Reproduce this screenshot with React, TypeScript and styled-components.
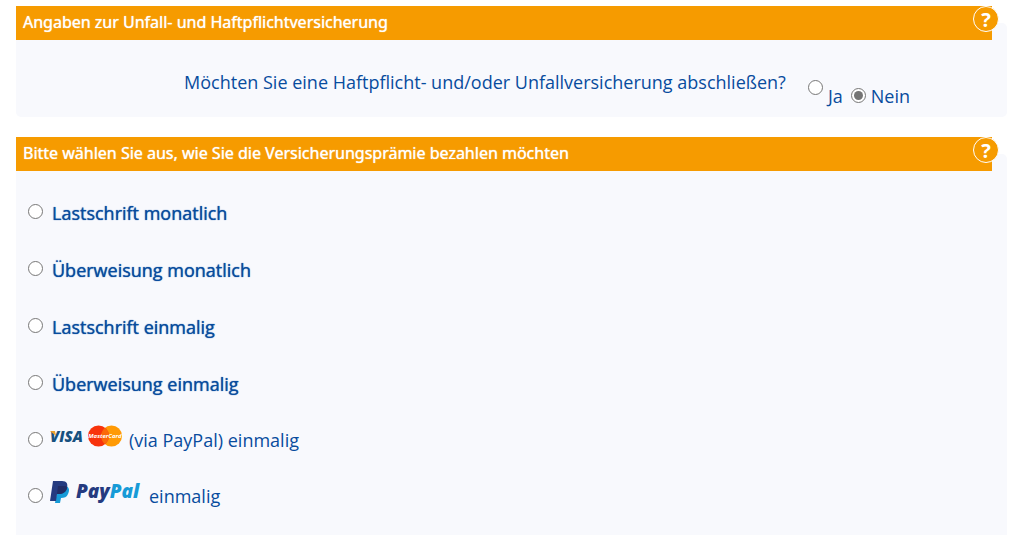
import React from "react";
import styled, { createGlobalStyle } from "styled-components";

const GlobalStyle = createGlobalStyle`
  * { box-sizing: border-box; }
  body {
    margin: 0;
    background: #fff;
    color: #084c9e;
    font-family: "Open Sans", "Noto Sans", sans-serif;
    font-size: 18px;
    line-height: 24px;
  }
`;

const Form = styled.form`
  display: flex;
  flex-direction: column;
  gap: 20px;
  padding: 6px 17px 0 16px;
`;

const Panel = styled.fieldset`
  min-width: 0;
  margin: 0;
  padding: 0;
  border: 0;
  border-radius: 5px;
  background: #f8f9fd;

  &:last-child {
    border-radius: 5px 5px 0 0;
  }
`;

const Legend = styled.legend`
  display: block;
  width: calc(100% - 15px);
  padding: 0;
`;

const TitleBar = styled.span`
  display: flex;
  align-items: flex-start;
  justify-content: space-between;
  height: 34px;
  padding-left: 7px;
  background: #f69b00;
  color: #fff;
`;

const Title = styled.span`
  font-family: "Noto Sans", sans-serif;
  font-size: 16px;
  line-height: 33px;
  text-shadow: 0 0 1px #fff;
`;

const HelpButton = styled.button`
  flex: none;
  width: 26px;
  height: 26px;
  margin-right: -7px;
  padding: 2px 0 0;
  border: 1px solid #fff;
  border-radius: 50%;
  background: #f69b00;
  color: #fff;
  font: bold 20px/22px "Noto Sans", sans-serif;
  text-align: center;
`;

const Question = styled.div`
  display: flex;
  align-items: flex-start;
  justify-content: flex-end;
  gap: 22px;
  padding: 30px 97px 9px 0;
`;

const Answers = styled.div`
  display: flex;
  gap: 8px;
`;

const Radio = styled.input`
  flex: none;
  width: 15px;
  height: 15px;
  margin: 0;
  accent-color: #757575;
`;

const Answer = styled.label<{ $raised?: boolean }>`
  display: flex;
  align-items: flex-start;
  gap: 5px;
  padding-top: 14px;

  ${Radio} {
    margin-top: ${(p) => (p.$raised ? -4 : 4)}px;
  }
`;

const Options = styled.div`
  display: flex;
  flex-direction: column;
  padding: 12px;
`;

const Option = styled.label<{ $logo?: boolean }>`
  display: flex;
  align-items: center;
  gap: ${(p) => (p.$logo ? 7 : 9)}px;
  height: ${(p) => (p.$logo ? 56 : 57)}px;
`;

const OptionText = styled.span<{ $strong?: boolean }>`
  padding-top: 2px;
  text-shadow: ${(p) => (p.$strong ? "0 0 1px #084c9e" : "none")};
`;

const Logo = styled.svg`
  flex: none;
  display: block;
  margin-bottom: 6px;
`;

function CardLogos() {
  return (
    <Logo width="72" height="24" viewBox="0 0 72 24" role="img" aria-label="Visa, MasterCard">
      <text x="0" y="18" fill="#17517f" fontFamily="Open Sans" fontSize="15" fontWeight="800" fontStyle="italic">VISA</text>
      <path d="M0 7h5l1 5z" fill="#e9a02b" />
      <circle cx="61.5" cy="12" r="10.5" fill="#ff9a05" />
      <circle cx="48.5" cy="12" r="10.5" fill="#f8330c" />
      <path d="M55 3.8a10.5 10.5 0 0 1 0 16.4 10.5 10.5 0 0 1 0-16.4" fill="#fb6909" />
      <text x="55" y="14" textAnchor="middle" fill="#fff" fontFamily="Open Sans" fontSize="6" fontWeight="700" fontStyle="italic">MasterCard</text>
    </Logo>
  );
}

function PayPalLogo() {
  return (
    <Logo width="92" height="32" viewBox="0 -4 92 32" role="img" aria-label="PayPal">
      <path d="M8 6h8c3 1 4 4 2 8-1 3-4 4-7 4l-1 5H5z" fill="#179bd7" />
      <path d="M3 1h9c5 0 6 3 5 7-1 4-4 6-9 6H7l-1 7H0z" fill="#253b80" />
      <path d="M8 6h8l1 2c-1 4-4 6-9 6H7z" fill="#222d65" />
      <text x="26" y="18" fontFamily="Open Sans" fontSize="19" fontWeight="800" fontStyle="italic">
        <tspan fill="#253b80">Pay</tspan>
        <tspan fill="#179bd7">Pal</tspan>
      </text>
    </Logo>
  );
}

function SectionTitle({ children }: { children: React.ReactNode }) {
  return (
    <Legend>
      <TitleBar>
        <Title>{children}</Title>
        <HelpButton type="button" aria-label="Hilfe">?</HelpButton>
      </TitleBar>
    </Legend>
  );
}

const transfers = [
  "Lastschrift monatlich",
  "Überweisung monatlich",
  "Lastschrift einmalig",
  "Überweisung einmalig",
];

export default function App() {
  return (
    <>
      <GlobalStyle />
      <Form>
        <Panel>
          <SectionTitle>Angaben zur Unfall- und Haftpflichtversicherung</SectionTitle>
          <Question>
            <span id="question">Möchten Sie eine Haftpflicht- und/oder Unfallversicherung abschließen?</span>
            <Answers role="radiogroup" aria-labelledby="question">
              <Answer $raised>
                <Radio type="radio" name="insurance" value="ja" />
                Ja
              </Answer>
              <Answer>
                <Radio type="radio" name="insurance" value="nein" defaultChecked />
                Nein
              </Answer>
            </Answers>
          </Question>
        </Panel>
        <Panel>
          <SectionTitle>Bitte wählen Sie aus, wie Sie die Versicherungsprämie bezahlen möchten</SectionTitle>
          <Options>
            {transfers.map((name) => (
              <Option key={name}>
                <Radio type="radio" name="payment" value={name} />
                <OptionText $strong>{name}</OptionText>
              </Option>
            ))}
            <Option $logo>
              <Radio type="radio" name="payment" value="card" />
              <CardLogos />
              <OptionText>(via PayPal) einmalig</OptionText>
            </Option>
            <Option $logo>
              <Radio type="radio" name="payment" value="paypal" />
              <PayPalLogo />
              <OptionText>einmalig</OptionText>
            </Option>
          </Options>
        </Panel>
      </Form>
    </>
  );
}
